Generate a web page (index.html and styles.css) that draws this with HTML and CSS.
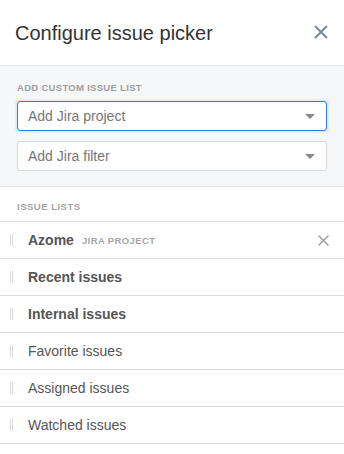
FILE: index.html
```html
<!DOCTYPE html>
<html>
<head>
<meta charset="utf-8">
<link rel="stylesheet" href="styles.css">
</head>
<body>
<div class="panel">
  <header class="header">
    <h1 class="title">Configure issue picker</h1>
    <button class="close" aria-label="Close">
      <svg width="14" height="14" viewBox="0 0 14 14"><path d="M1 1L13 13M13 1L1 13" stroke="#6f8b99" stroke-width="1.8" fill="none"/></svg>
    </button>
  </header>
  <section class="custom">
    <div class="label">ADD CUSTOM ISSUE LIST</div>
    <div class="select focused">
      <span class="placeholder">Add Jira project</span>
      <span class="caret"></span>
    </div>
    <div class="select">
      <span class="placeholder">Add Jira filter</span>
      <span class="caret"></span>
    </div>
  </section>
  <section class="lists">
    <div class="label small">ISSUE LISTS</div>
    <ul class="rows">
      <li class="row"><span class="handle"></span><span class="name bold">Azome</span><span class="tag">JIRA PROJECT</span>
        <span class="remove"><svg width="11" height="11" viewBox="0 0 11 11"><path d="M0.5 0.5L10.5 10.5M10.5 0.5L0.5 10.5" stroke="#9a9a9a" stroke-width="1.3" fill="none"/></svg></span>
      </li>
      <li class="row"><span class="handle"></span><span class="name bold">Recent issues</span></li>
      <li class="row"><span class="handle"></span><span class="name bold">Internal issues</span></li>
      <li class="row"><span class="handle"></span><span class="name">Favorite issues</span></li>
      <li class="row"><span class="handle"></span><span class="name">Assigned issues</span></li>
      <li class="row"><span class="handle"></span><span class="name">Watched issues</span></li>
    </ul>
  </section>
</div>
</body>
</html>
```

FILE: styles.css
```css
* { box-sizing: border-box; }
html, body { margin: 0; padding: 0; background: #fff; }
body { font-family: "Liberation Sans", Arial, sans-serif; color: #333; }

.header {
  height: 66px;
  display: flex;
  align-items: center;
  justify-content: space-between;
  padding: 0 16px 0 15px;
  border-bottom: 1px solid #e3e7eb;
}
.title {
  margin: 0;
  font-size: 20px;
  font-weight: normal;
  color: #333;
  line-height: 24px;
}
.close {
  border: 0;
  background: none;
  padding: 0;
  width: 14px;
  height: 14px;
  display: flex;
  margin-top: -1px;
}

.custom {
  background: #f6f7f9;
  padding: 16px 17px 15px 17px;
  border-bottom: 1px solid #e3e7eb;
}
.label {
  font-size: 9.5px;
  line-height: 12px;
  font-weight: bold;
  color: #a0a0a0;
  letter-spacing: 0.3px;
}
.custom .label { margin-bottom: 7px; }
.select {
  height: 30px;
  background: #fff;
  border: 1px solid #d9d9d9;
  border-radius: 3px;
  display: flex;
  align-items: center;
  justify-content: space-between;
  padding: 0 11px 0 10px;
}
.select + .select { margin-top: 10px; }
.select.focused {
  border-color: #2a7ae2;
  box-shadow: 0 0 0 2px #e3eefb;
}
.placeholder {
  font-size: 14px;
  color: #777;
}
.caret {
  width: 0;
  height: 0;
  border-left: 5px solid transparent;
  border-right: 5px solid transparent;
  border-top: 5px solid #8a8a8a;
}

.lists { padding-top: 14px; }
.label.small {
  font-size: 9.5px;
  line-height: 11px;
  letter-spacing: 0.5px;
  padding-left: 17px;
  padding-bottom: 9px;
  border-bottom: 1px solid #dcdcdc;
  color: #a6a6a6;
}
.rows { list-style: none; margin: 0; padding: 0; }
.row {
  height: 37px;
  border-bottom: 1px solid #dcdcdc;
  display: flex;
  align-items: center;
  padding-left: 10px;
  padding-right: 15px;
}
.handle {
  width: 3px;
  height: 12px;
  border-left: 1px solid #dadada;
  border-right: 1px solid #dadada;
  margin-right: 15px;
}
.name { font-size: 14px; color: #555; }
.name.bold { font-weight: bold; }
.tag {
  margin-left: 8px;
  font-size: 9.5px;
  font-weight: bold;
  color: #a6a6a6;
  letter-spacing: 0.4px;
}
.remove { margin-left: auto; display: flex; }
```
